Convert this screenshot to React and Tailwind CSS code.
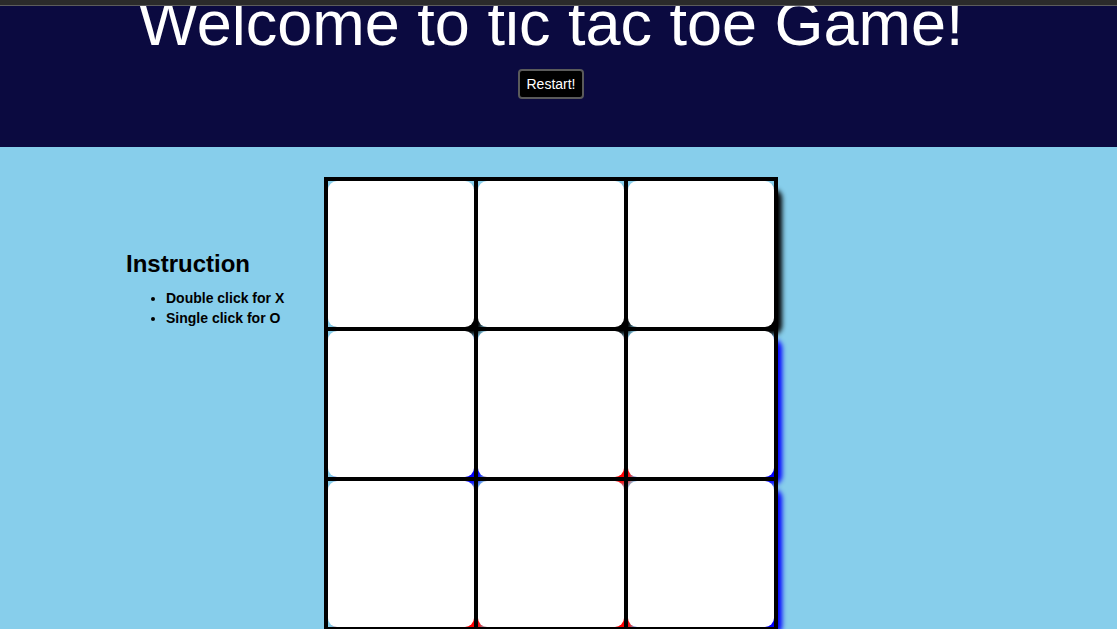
import React from 'react';

const shadows = [
  'shadow-[8px_8px_5px_#000]',
  'shadow-[8px_8px_5px_#000]',
  'shadow-[8px_8px_5px_#000]',
  'shadow-[8px_8px_5px_#0000ff]',
  'shadow-[8px_8px_5px_#ff0000]',
  'shadow-[8px_8px_5px_#0000ff]',
  'shadow-[8px_8px_5px_#ff0000]',
  'shadow-[8px_8px_5px_#ff0000]',
  'shadow-[8px_8px_5px_#0000ff]',
];

function Cell({ shadow }) {
  return (
    <div className="w-[150px] h-[150px] border-2 border-black">
      <div className={`relative -z-10 w-full h-full bg-white rounded-[9px] ${shadow}`} />
    </div>
  );
}

export default function App() {
  return (
    <div className="min-h-screen bg-[#87ceeb] font-['Liberation_Sans',Arial,sans-serif] overflow-hidden">
      {/* top strip */}
      <div className="relative z-10 h-[6px] bg-[#2b2b2b] border-b border-[#5c5c5c]" />

      {/* Header */}
      <header className="bg-[#0b0a40] h-[141px]">
        <div className="w-[1102px] flex flex-col items-center">
          <h1 className="mt-[-18px] text-[63px] leading-[70px] text-white font-normal whitespace-nowrap">
            Welcome to tic tac toe Game!
          </h1>
          <button className="mt-[11px] h-[30px] px-[6px] bg-black text-white text-[14px] rounded-[4px] border-2 border-[#5a5a5a]">
            Restart!
          </button>
        </div>
      </header>

      {/* Board */}
      <div className="flex pt-[30px]">
        <div className="w-[324px] shrink-0 pl-[126px] pt-[73px]">
          <h2 className="text-[24px] font-bold text-black leading-[28px]">Instruction</h2>
          <ul className="mt-[10px] list-disc pl-10 text-[14px] font-bold leading-[20px] text-black">
            <li>Double click for X</li>
            <li>Single click for O</li>
          </ul>
        </div>

        <div className="isolate">
          <div className="grid grid-cols-3 border-2 border-black">
            {shadows.map((s, i) => (
              <Cell key={i} shadow={s} />
            ))}
          </div>
        </div>
      </div>
    </div>
  );
}
